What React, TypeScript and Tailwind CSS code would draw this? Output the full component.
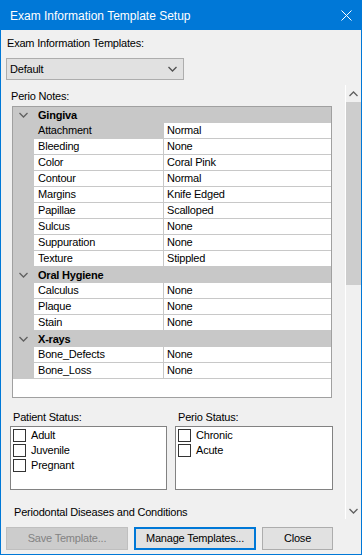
import React from 'react';

type Row = { name: string; value: string; selected?: boolean };
type Category = { title: string; rows: Row[] };

const categories: Category[] = [
  {
    title: 'Gingiva',
    rows: [
      { name: 'Attachment', value: 'Normal', selected: true },
      { name: 'Bleeding', value: 'None' },
      { name: 'Color', value: 'Coral Pink' },
      { name: 'Contour', value: 'Normal' },
      { name: 'Margins', value: 'Knife Edged' },
      { name: 'Papillae', value: 'Scalloped' },
      { name: 'Sulcus', value: 'None' },
      { name: 'Suppuration', value: 'None' },
      { name: 'Texture', value: 'Stippled' },
    ],
  },
  {
    title: 'Oral Hygiene',
    rows: [
      { name: 'Calculus', value: 'None' },
      { name: 'Plaque', value: 'None' },
      { name: 'Stain', value: 'None' },
    ],
  },
  {
    title: 'X-rays',
    rows: [
      { name: 'Bone_Defects', value: 'None' },
      { name: 'Bone_Loss', value: 'None' },
    ],
  },
];

const Chevron = ({ up = false, className = '' }: { up?: boolean; className?: string }) => (
  <svg width="9" height="6" viewBox="0 0 9 6" className={className}>
    <path
      d={up ? 'M0.5 5 L4.5 1 L8.5 5' : 'M0.5 1 L4.5 5 L8.5 1'}
      fill="none"
      stroke="currentColor"
      strokeWidth="1.3"
    />
  </svg>
);

const CheckItem = ({ label }: { label: string }) => (
  <div className="flex items-center h-[15px]">
    <span className="w-[13px] h-[13px] border border-[#333333] bg-white shrink-0" />
    <span className="ml-[5px] leading-[15px]">{label}</span>
  </div>
);

const CheckList = ({ items }: { items: string[] }) => (
  <div className="h-[64px] border border-[#828282] bg-white pl-[2px] pt-[1px]">
    {items.map((i) => (
      <CheckItem key={i} label={i} />
    ))}
  </div>
);

const PropertyGrid = () => (
  <div className="ml-[11px] w-[320px] h-[292px] border border-[#a0a0a0] bg-white overflow-hidden">
    {categories.map((cat) => (
      <div key={cat.title}>
        <div className="h-[16px] bg-[#c8c8c8] flex items-center">
          <div className="w-[21px] flex justify-center text-[#606060]">
            <Chevron />
          </div>
          <span className="ml-[4px] font-bold leading-[16px] text-black">{cat.title}</span>
        </div>
        {cat.rows.map((r) => (
          <div key={r.name} className="h-[16px] flex bg-[#c8c8c8]">
            <div className="w-[21px] shrink-0" />
            <div
              className={`w-[129px] shrink-0 pl-[4px] leading-[15px] border-b border-[#c8c8c8] ${
                r.selected ? 'bg-[#c8c8c8]' : 'bg-white'
              }`}
            >
              {r.name}
            </div>
            <div className="w-px bg-[#c8c8c8]" />
            <div className="flex-1 pl-[3px] leading-[15px] bg-white border-b border-[#c8c8c8]">{r.value}</div>
          </div>
        ))}
      </div>
    ))}
  </div>
);

export default function App() {
  return (
    <div
      className="w-[362px] h-[555px] border border-[#0078d7] bg-[#f0f0f0] flex flex-col text-[11px] tracking-[-0.2px] text-black overflow-hidden"
      style={{ fontFamily: '"Liberation Sans", Arial, sans-serif' }}
    >
      {/* Title bar */}
      <div className="h-[29px] bg-[#0078d7] flex items-center pl-[9px] pr-[9px] text-white shrink-0">
        <span className="text-[12px] tracking-normal flex-1">Exam Information Template Setup</span>
        <svg width="11" height="11" viewBox="0 0 11 11">
          <path d="M0.5 0.5 L10.5 10.5 M10.5 0.5 L0.5 10.5" stroke="white" strokeWidth="1" />
        </svg>
      </div>

      {/* Template selector */}
      <div className="pl-[6px] pt-[6px] leading-[14px]">Exam Information Templates:</div>
      <div className="ml-[5px] mt-[8px] w-[178px] h-[22px] bg-[#e1e1e1] border border-[#adadad] flex items-center pl-[3px] pr-[6px] shrink-0">
        <span className="flex-1">Default</span>
        <Chevron className="text-[#505050]" />
      </div>

      {/* Scroll area */}
      <div className="mt-[5px] h-[434px] flex shrink-0">
        <div className="flex-1 overflow-hidden">
          <div className="pl-[10px] pt-[4px] h-[21px] leading-[14px]">Perio Notes:</div>
          <PropertyGrid />
          <div className="mt-[12px] flex">
            <div className="ml-[9px] w-[157px]">
              <div className="pl-[3px] h-[16px] leading-[14px]">Patient Status:</div>
              <CheckList items={['Adult', 'Juvenile', 'Pregnant']} />
            </div>
            <div className="ml-[8px] w-[158px]">
              <div className="pl-[3px] h-[16px] leading-[14px]">Perio Status:</div>
              <CheckList items={['Chronic', 'Acute']} />
            </div>
          </div>
          <div className="mt-[15px] pl-[13px] leading-[14px]">Periodontal Diseases and Conditions</div>
        </div>
        <div className="w-[16px] border-l border-white bg-[#f0f0f0] flex flex-col items-center">
          <div className="h-[17px] flex items-center justify-center text-[#606060]">
            <Chevron up />
          </div>
          <div className="w-[15px] h-[183px] bg-[#cdcdcd]" />
          <div className="flex-1" />
          <div className="h-[17px] flex items-center justify-center text-[#606060]">
            <Chevron />
          </div>
        </div>
      </div>

      {/* Buttons */}
      <div className="mt-[8px] flex pl-[5px]">
        <button className="w-[122px] h-[23px] bg-[#cccccc] border border-[#bfbfbf] text-[#838383]">
          Save Template...
        </button>
        <button className="ml-[6px] w-[122px] h-[23px] bg-[#e1e1e1] border-2 border-[#0078d7]">
          Manage Templates...
        </button>
        <button className="ml-[6px] w-[71px] h-[23px] bg-[#e1e1e1] border border-[#adadad]">Close</button>
      </div>
    </div>
  );
}
